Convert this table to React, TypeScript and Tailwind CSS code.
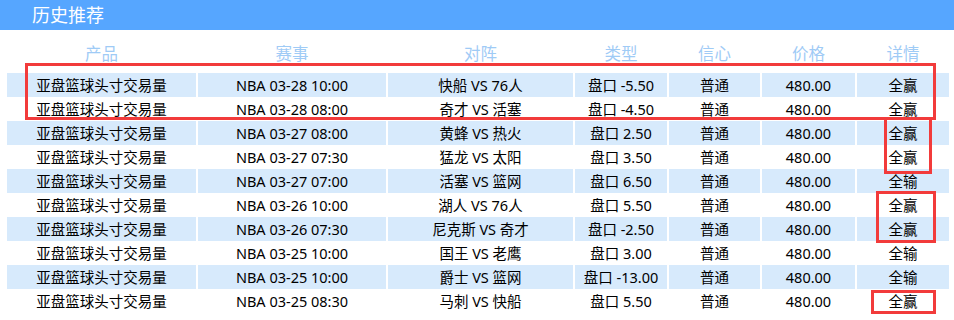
import { FC } from "react";

type Row = {
  product: string;
  match: string;
  teams: string;
  type: string;
  level: string;
  price: string;
  result: string;
};

const columns = ["产品", "赛事", "对阵", "类型", "信心", "价格", "详情"];

const rows: Row[] = [
  { product: "亚盘篮球头寸交易量", match: "NBA 03-28 10:00", teams: "快船 VS 76人", type: "盘口 -5.50", level: "普通", price: "480.00", result: "全赢" },
  { product: "亚盘篮球头寸交易量", match: "NBA 03-28 08:00", teams: "奇才 VS 活塞", type: "盘口 -4.50", level: "普通", price: "480.00", result: "全赢" },
  { product: "亚盘篮球头寸交易量", match: "NBA 03-27 08:00", teams: "黄蜂 VS 热火", type: "盘口 2.50", level: "普通", price: "480.00", result: "全赢" },
  { product: "亚盘篮球头寸交易量", match: "NBA 03-27 07:30", teams: "猛龙 VS 太阳", type: "盘口 3.50", level: "普通", price: "480.00", result: "全赢" },
  { product: "亚盘篮球头寸交易量", match: "NBA 03-27 07:00", teams: "活塞 VS 篮网", type: "盘口 6.50", level: "普通", price: "480.00", result: "全输" },
  { product: "亚盘篮球头寸交易量", match: "NBA 03-26 10:00", teams: "湖人 VS 76人", type: "盘口 5.50", level: "普通", price: "480.00", result: "全赢" },
  { product: "亚盘篮球头寸交易量", match: "NBA 03-26 07:30", teams: "尼克斯 VS 奇才", type: "盘口 -2.50", level: "普通", price: "480.00", result: "全赢" },
  { product: "亚盘篮球头寸交易量", match: "NBA 03-25 10:00", teams: "国王 VS 老鹰", type: "盘口 3.00", level: "普通", price: "480.00", result: "全输" },
  { product: "亚盘篮球头寸交易量", match: "NBA 03-25 10:00", teams: "爵士 VS 篮网", type: "盘口 -13.00", level: "普通", price: "480.00", result: "全输" },
  { product: "亚盘篮球头寸交易量", match: "NBA 03-25 08:30", teams: "马刺 VS 快船", type: "盘口 5.50", level: "普通", price: "480.00", result: "全赢" },
];

// red annotation frames drawn over the table
const marks = [
  "left-[25px] top-[63px] w-[911px] h-[57px]",
  "left-[884px] top-[117px] w-[48px] h-[57px]",
  "left-[876px] top-[191px] w-[60px] h-[52px]",
  "left-[871px] top-[290px] w-[65px] h-[24px]",
];

const gridCols = "grid grid-cols-[189px_188px_185px_92px_91px_93px_92px] gap-x-[2px]";

export const HistoryTable: FC = () => {
  return (
    <div className="relative w-[954px] h-[320px] bg-white font-['Noto_Sans','Noto_Sans_CJK_SC',sans-serif] overflow-hidden">
      <div className="h-[30px] bg-[#56a6ff] flex items-center pl-[32px]">
        <span className="text-white text-[18px] leading-none">历史推荐</span>
      </div>
      <div className="pl-[7px]">
        <div className={`${gridCols} mt-[12px] h-[24px] items-center`}>
          {columns.map((c) => (
            <div key={c} className="text-center text-[16.5px] leading-none text-[#9fcbf6]">
              {c}
            </div>
          ))}
        </div>
        <div className="mt-[7px]">
          {rows.map((r, i) => (
            <div key={i} className={`${gridCols} h-[24px]`}>
              {[r.product, r.match, r.teams, r.type, r.level, r.price, r.result].map((v, j) => (
                <div
                  key={j}
                  className={`flex items-center justify-center text-[14.5px] leading-none text-black ${
                    i % 2 === 0 ? "bg-[#d7eafc]" : "bg-white"
                  }`}
                >
                  {v}
                </div>
              ))}
            </div>
          ))}
        </div>
      </div>
      {marks.map((m, i) => (
        <div key={i} className={`absolute border-[3px] border-[#f23b3b] ${m}`} />
      ))}
    </div>
  );
};

export default function App() {
  return <HistoryTable />;
}
